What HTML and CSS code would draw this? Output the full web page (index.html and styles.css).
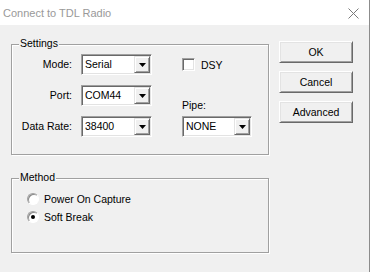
FILE: index.html
```html
<!DOCTYPE html>
<html>
<head>
<meta charset="utf-8">
<link rel="stylesheet" href="styles.css">
</head>
<body>
<div class="window">
  <div class="titlebar">
    <span class="title">Connect to TDL Radio</span>
    <svg class="close" width="11" height="11" viewBox="0 0 11 11"><path d="M0.5 0.5 L10.5 10.5 M10.5 0.5 L0.5 10.5" stroke="#7a7a7a" stroke-width="1" fill="none"/></svg>
  </div>
  <div class="client">
    <div class="left">
      <div class="group settings">
        <span class="legend">Settings</span>
        <div class="settings-body">
          <div class="fields">
            <span class="lbl">Mode:</span>
            <div class="combo"><span class="value">Serial</span><span class="drop"><svg width="7" height="4" viewBox="0 0 7 4"><polygon points="0,0 7,0 3.5,4" fill="#000"/></svg></span></div>
            <span class="lbl">Port:</span>
            <div class="combo"><span class="value">COM44</span><span class="drop"><svg width="7" height="4" viewBox="0 0 7 4"><polygon points="0,0 7,0 3.5,4" fill="#000"/></svg></span></div>
            <span class="lbl">Data Rate:</span>
            <div class="combo"><span class="value">38400</span><span class="drop"><svg width="7" height="4" viewBox="0 0 7 4"><polygon points="0,0 7,0 3.5,4" fill="#000"/></svg></span></div>
          </div>
          <div class="side">
            <div class="check"><span class="box"></span><span>DSY</span></div>
            <div class="pipe-label">Pipe:</div>
            <div class="combo"><span class="value">NONE</span><span class="drop"><svg width="7" height="4" viewBox="0 0 7 4"><polygon points="0,0 7,0 3.5,4" fill="#000"/></svg></span></div>
          </div>
        </div>
      </div>
      <div class="group method">
        <span class="legend">Method</span>
        <div class="radios">
          <div class="radio-row"><span class="radio"></span><span>Power On Capture</span></div>
          <div class="radio-row"><span class="radio checked"></span><span>Soft Break</span></div>
        </div>
      </div>
    </div>
    <div class="buttons">
      <div class="btn">OK</div>
      <div class="btn">Cancel</div>
      <div class="btn">Advanced</div>
    </div>
  </div>
</div>
</body>
</html>
```

FILE: styles.css
```css
html, body {
  margin: 0;
  padding: 0;
  background: #f0f0f0;
}
body {
  font-family: "Liberation Sans", Arial, sans-serif;
  font-size: 10.5px;
  color: #000;
}
.window {
  width: 370px;
  height: 272px;
  box-sizing: border-box;
  border-right: 1px solid #8c8c8c;
  background: #f0f0f0;
  overflow: hidden;
}
.titlebar {
  height: 25px;
  background: #fff;
  display: flex;
  align-items: center;
  justify-content: space-between;
  padding: 0 10px 0 3px;
}
.title {
  font-size: 11px;
  color: #999;
}
.close {
  display: block;
  margin-top: 1px;
}
.client {
  display: flex;
  padding-left: 11px;
}
.left {
  width: 258px;
  display: flex;
  flex-direction: column;
}
.group {
  position: relative;
  box-sizing: border-box;
  border: 1px solid #a0a0a0;
  box-shadow: inset 1px 1px 0 #fff, 1px 1px 0 #fff;
}
.legend {
  position: absolute;
  left: 7px;
  top: -8px;
  padding: 0 1px;
  line-height: 13px;
  background: #f0f0f0;
}
.settings {
  margin-top: 19px;
  height: 111px;
}
.settings-body {
  display: flex;
  padding-top: 9px;
}
.fields {
  display: grid;
  grid-template-columns: 60px 71px;
  grid-auto-rows: 21px;
  column-gap: 9px;
  row-gap: 10px;
}
.lbl {
  text-align: right;
  line-height: 21px;
}
.combo {
  width: 71px;
  height: 21px;
  box-sizing: border-box;
  background: #fff;
  border: 1px solid;
  border-color: #a0a0a0 #fff #fff #a0a0a0;
  box-shadow: inset 1px 1px 0 #696969, inset -1px -1px 0 #e3e3e3;
  padding: 1px;
  display: flex;
}
.value {
  flex: 1;
  padding-left: 2px;
  line-height: 17px;
}
.drop {
  width: 16px;
  box-sizing: border-box;
  background: #f0f0f0;
  border: 1px solid;
  border-color: #e3e3e3 #696969 #696969 #e3e3e3;
  box-shadow: inset 1px 1px 0 #fff, inset -1px -1px 0 #a0a0a0;
  display: flex;
  align-items: center;
  justify-content: center;
}
.drop svg {
  display: block;
}
.side {
  margin-left: 30px;
  display: flex;
  flex-direction: column;
}
.check {
  height: 21px;
  display: flex;
  align-items: center;
  gap: 6px;
}
.box {
  width: 13px;
  height: 13px;
  box-sizing: border-box;
  background: #fff;
  border: 1px solid;
  border-color: #a0a0a0 #fff #fff #a0a0a0;
  box-shadow: inset 1px 1px 0 #696969, inset -1px -1px 0 #e3e3e3;
}
.pipe-label {
  margin-top: 24px;
  line-height: 13px;
}
.side .combo {
  width: 70px;
  margin-top: 4px;
}
.method {
  margin-top: 23px;
  height: 75px;
}
.radios {
  padding: 11px 0 0 15px;
}
.radio-row {
  height: 18px;
  display: flex;
  align-items: center;
  gap: 5px;
}
.radio {
  width: 12px;
  height: 12px;
  box-sizing: border-box;
  border-radius: 50%;
  background: #fff;
  border: 1px solid;
  border-color: #a0a0a0 #fff #fff #a0a0a0;
  box-shadow: inset 1px 1px 0 #8a8a8a;
  position: relative;
}
.radio.checked::after {
  content: "";
  position: absolute;
  left: 3px;
  top: 3px;
  width: 4px;
  height: 4px;
  border-radius: 50%;
  background: #000;
}
.buttons {
  margin-left: 10px;
  margin-top: 16px;
  display: flex;
  flex-direction: column;
  gap: 8px;
}
.btn {
  width: 74px;
  height: 22px;
  box-sizing: border-box;
  border: 1px solid;
  border-color: #fff #696969 #696969 #fff;
  box-shadow: inset 1px 1px 0 #e3e3e3, inset -1px -1px 0 #a0a0a0;
  background: #f0f0f0;
  display: flex;
  align-items: center;
  justify-content: center;
}
```
